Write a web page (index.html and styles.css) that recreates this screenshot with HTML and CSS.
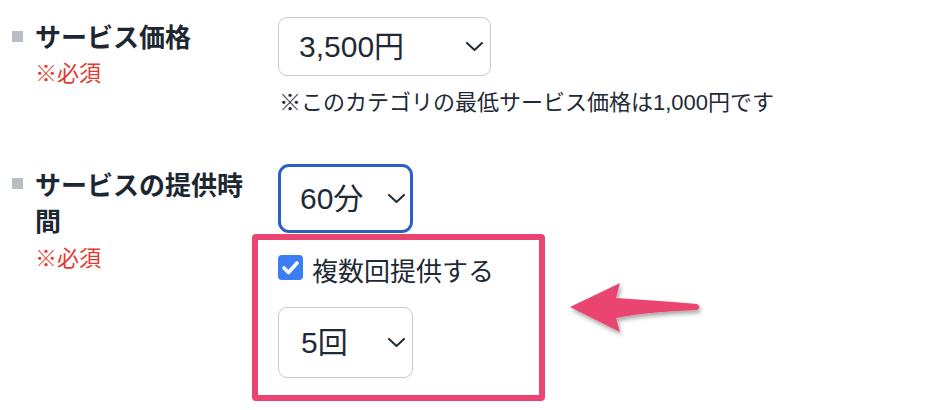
FILE: index.html
```html
<!DOCTYPE html>
<html lang="ja">
<head>
<meta charset="utf-8">
<title>サービス設定</title>
<link rel="stylesheet" href="styles.css">
</head>
<body>
<div class="form">
  <div class="row row-price">
    <div class="label">
      <div class="title"><span class="bullet"></span><span class="title-text">サービス価格</span></div>
      <div class="required">※必須</div>
    </div>
    <div class="field">
      <div class="select select-price">
        <span class="select-value">3,500円</span>
        <svg class="chevron" width="17" height="9" viewBox="0 0 17 9"><polyline points="1,1 8.5,8 16,1" fill="none" stroke="#1f2b36" stroke-width="2" stroke-linecap="round" stroke-linejoin="round"/></svg>
      </div>
      <p class="note">※このカテゴリの最低サービス価格は1,000円です</p>
    </div>
  </div>
  <div class="row row-time">
    <div class="label">
      <div class="title"><span class="bullet"></span><span class="title-text">サービスの提供時間</span></div>
      <div class="required required-time">※必須</div>
    </div>
    <div class="field">
      <div class="select select-time">
        <span class="select-value">60分</span>
        <svg class="chevron" width="17" height="9" viewBox="0 0 17 9"><polyline points="1,1 8.5,8 16,1" fill="none" stroke="#1f2b36" stroke-width="2" stroke-linecap="round" stroke-linejoin="round"/></svg>
      </div>
      <div class="highlight">
        <div class="check-row">
          <span class="checkbox"><svg width="25" height="25" viewBox="0 0 25 25"><polyline points="6,13 10.5,17.5 19,8" fill="none" stroke="#fff" stroke-width="3.6" stroke-linecap="round" stroke-linejoin="round"/></svg></span>
          <span class="check-label">複数回提供する</span>
        </div>
        <div class="select select-count">
          <span class="select-value">5回</span>
          <svg class="chevron" width="17" height="9" viewBox="0 0 17 9"><polyline points="1,1 8.5,8 16,1" fill="none" stroke="#1f2b36" stroke-width="2" stroke-linecap="round" stroke-linejoin="round"/></svg>
        </div>
      </div>
    </div>
  </div>
</div>
<svg class="arrow" width="160" height="80" viewBox="560 270 160 80">
  <defs>
    <filter id="sh" x="-20%" y="-30%" width="140%" height="170%">
      <feDropShadow dx="1.5" dy="3" stdDeviation="2" flood-color="#000" flood-opacity="0.35"/>
    </filter>
  </defs>
  <path d="M570,307 L620,283 L616,298 C645,300 675,302 697,304 Q702,307 697,310 C670,311 642,313 616,318 L620,332 Z" fill="#ea4570" filter="url(#sh)"/>
</svg>
</body>
</html>
```
FILE: styles.css
```css
* { box-sizing: border-box; }
html, body { margin: 0; padding: 0; background: #ffffff; }
body {
  font-family: "Liberation Sans", "Noto Sans CJK JP", sans-serif;
  color: #1e2a35;
  width: 946px;
  height: 410px;
  overflow: hidden;
  position: relative;
}
.form { display: flex; flex-direction: column; }
.row { display: flex; align-items: flex-start; }
.row-price { padding-top: 17px; }
.row-time { padding-top: 46px; }
.label {
  width: 278px;
  padding-left: 12px;
  padding-right: 24px;
  display: flex;
  flex-direction: column;
}
.row-price .label { margin-top: 1px; }
.row-time .label { margin-top: 1.5px; }
.title { display: flex; align-items: flex-start; }
.bullet {
  flex: none;
  width: 11px;
  height: 11px;
  background: #b9bec2;
  margin-top: 12.5px;
  margin-right: 12px;
}
.title-text {
  font-family: "Noto Sans CJK JP", sans-serif;
  font-weight: 700;
  font-size: 26px;
  line-height: 36px;
  color: #1c2731;
}
.required {
  font-family: "Noto Sans CJK JP", sans-serif;
  font-size: 22px;
  line-height: 34px;
  color: #e33a30;
  padding-left: 23px;
}
.required-time { line-height: 37px; }
.field { display: flex; flex-direction: column; align-items: flex-start; }
.select {
  display: flex;
  align-items: center;
  justify-content: space-between;
  background: #fff;
  border: 1.5px solid #c6cacd;
  border-radius: 9px;
  font-size: 30px;
  color: #1e2a35;
}
.select-value { line-height: 1; }
.select-price { width: 213px; height: 59px; padding: 0 7px 0 20px; }
.select-time {
  width: 135px;
  height: 69px;
  border: 3px solid #2a5fc6;
  border-radius: 11px;
  padding: 0 5px 0 19px;
}
.select-count { width: 135px; height: 71px; padding: 0 7px 0 22px; margin-top: 27px; }
.chevron { flex: none; }
.note {
  margin: 12px 0 0 1px;
  font-size: 22px;
  line-height: 30px;
  color: #1e2a35;
}
.highlight {
  margin-top: 1px;
  margin-left: -26px;
  width: 293px;
  border: 6px solid #ea4570;
  border-radius: 4px;
  padding: 15px 20px 17px 20px;
  display: flex;
  flex-direction: column;
  align-items: flex-start;
}
.check-row { display: flex; align-items: center; height: 25px; }
.checkbox {
  flex: none;
  width: 25px;
  height: 25px;
  background: #3a7ef1;
  border-radius: 4px;
  display: flex;
}
.check-label {
  font-family: "Noto Sans CJK JP", sans-serif;
  font-size: 26px;
  line-height: 25px;
  margin-left: 9px;
  padding-top: 4px;
  color: #1e2a35;
}
.arrow { position: absolute; left: 560px; top: 270px; }
```
